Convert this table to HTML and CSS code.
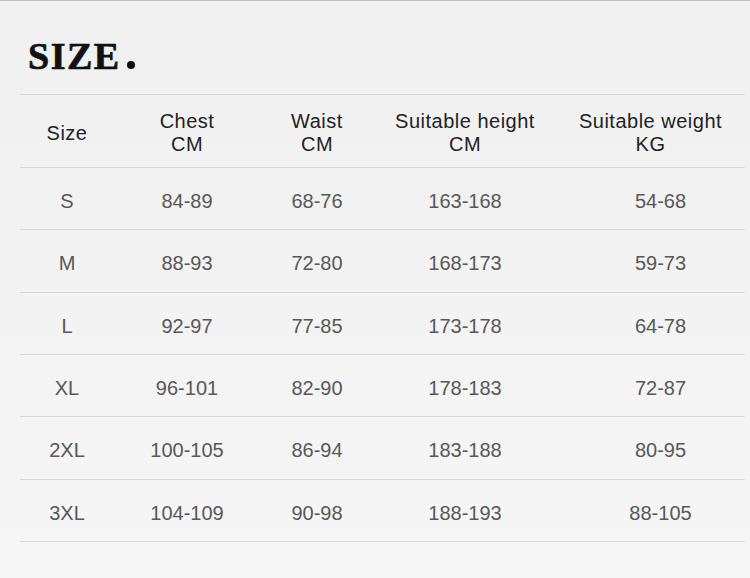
FILE: index.html
```html
<!DOCTYPE html>
<html lang="en">
<head>
<meta charset="utf-8">
<title>Size chart</title>
<link rel="stylesheet" href="styles.css">
</head>
<body>
<div class="page">
  <h1 class="title">SIZE<span class="dot"></span></h1>
  <div class="table">
    <div class="row head">
      <div class="cell">Size</div>
      <div class="cell"><span class="ln">Chest</span><span class="ln">CM</span></div>
      <div class="cell"><span class="ln">Waist</span><span class="ln">CM</span></div>
      <div class="cell"><span class="ln">Suitable height</span><span class="ln">CM</span></div>
      <div class="cell"><span class="ln">Suitable weight</span><span class="ln">KG</span></div>
    </div>
    <div class="row"><div class="cell">S</div><div class="cell">84-89</div><div class="cell">68-76</div><div class="cell">163-168</div><div class="cell w">54-68</div></div>
    <div class="row"><div class="cell">M</div><div class="cell">88-93</div><div class="cell">72-80</div><div class="cell">168-173</div><div class="cell w">59-73</div></div>
    <div class="row"><div class="cell">L</div><div class="cell">92-97</div><div class="cell">77-85</div><div class="cell">173-178</div><div class="cell w">64-78</div></div>
    <div class="row"><div class="cell">XL</div><div class="cell">96-101</div><div class="cell">82-90</div><div class="cell">178-183</div><div class="cell w">72-87</div></div>
    <div class="row"><div class="cell">2XL</div><div class="cell">100-105</div><div class="cell">86-94</div><div class="cell">183-188</div><div class="cell w">80-95</div></div>
    <div class="row"><div class="cell">3XL</div><div class="cell">104-109</div><div class="cell">90-98</div><div class="cell">188-193</div><div class="cell w">88-105</div></div>
  </div>
</div>
</body>
</html>
```

FILE: styles.css
```css
html, body {
  margin: 0;
  padding: 0;
}
body {
  width: 750px;
  height: 578px;
  overflow: hidden;
  background: linear-gradient(180deg, #f0f0f0 0%, #f3f3f3 50%, #f6f6f6 100%);
  border-top: 1px solid #bdbdbd;
  box-sizing: border-box;
}
.page {
  display: flex;
  flex-direction: column;
}
.title {
  margin: 0;
  height: 93px;
  box-sizing: border-box;
  padding: 36px 0 0 28px;
  font-family: "Liberation Serif", "Times New Roman", serif;
  font-weight: bold;
  font-size: 38px;
  line-height: 38px;
  letter-spacing: 1.5px;
  color: #111;
  -webkit-text-stroke: 0.7px #111;
  display: flex;
  align-items: baseline;
}
.dot {
  display: inline-block;
  width: 8px;
  height: 8px;
  border-radius: 50%;
  background: #111;
  margin-left: 6px;
}
.table {
  margin-left: 20px;
  width: 725px;
  border-top: 1px solid #d9d9d9;
}
.row {
  display: grid;
  grid-template-columns: 94px 146px 114px 182px 189px;
  height: 62.33px;
  box-sizing: border-box;
  border-bottom: 1px solid #d9d9d9;
  align-items: center;
  font-family: "Liberation Sans", Arial, sans-serif;
  font-size: 20px;
  color: #585858;
  padding-top: 6px;
}
.row.head {
  height: 73px;
  padding-top: 4px;
  font-size: 20px;
  letter-spacing: 0.5px;
  line-height: 23px;
  color: #222;
}
.cell {
  text-align: center;
}
.ln {
  display: block;
  height: 23px;
  line-height: 23px;
}
.cell.w {
  padding-left: 20px;
}
```
